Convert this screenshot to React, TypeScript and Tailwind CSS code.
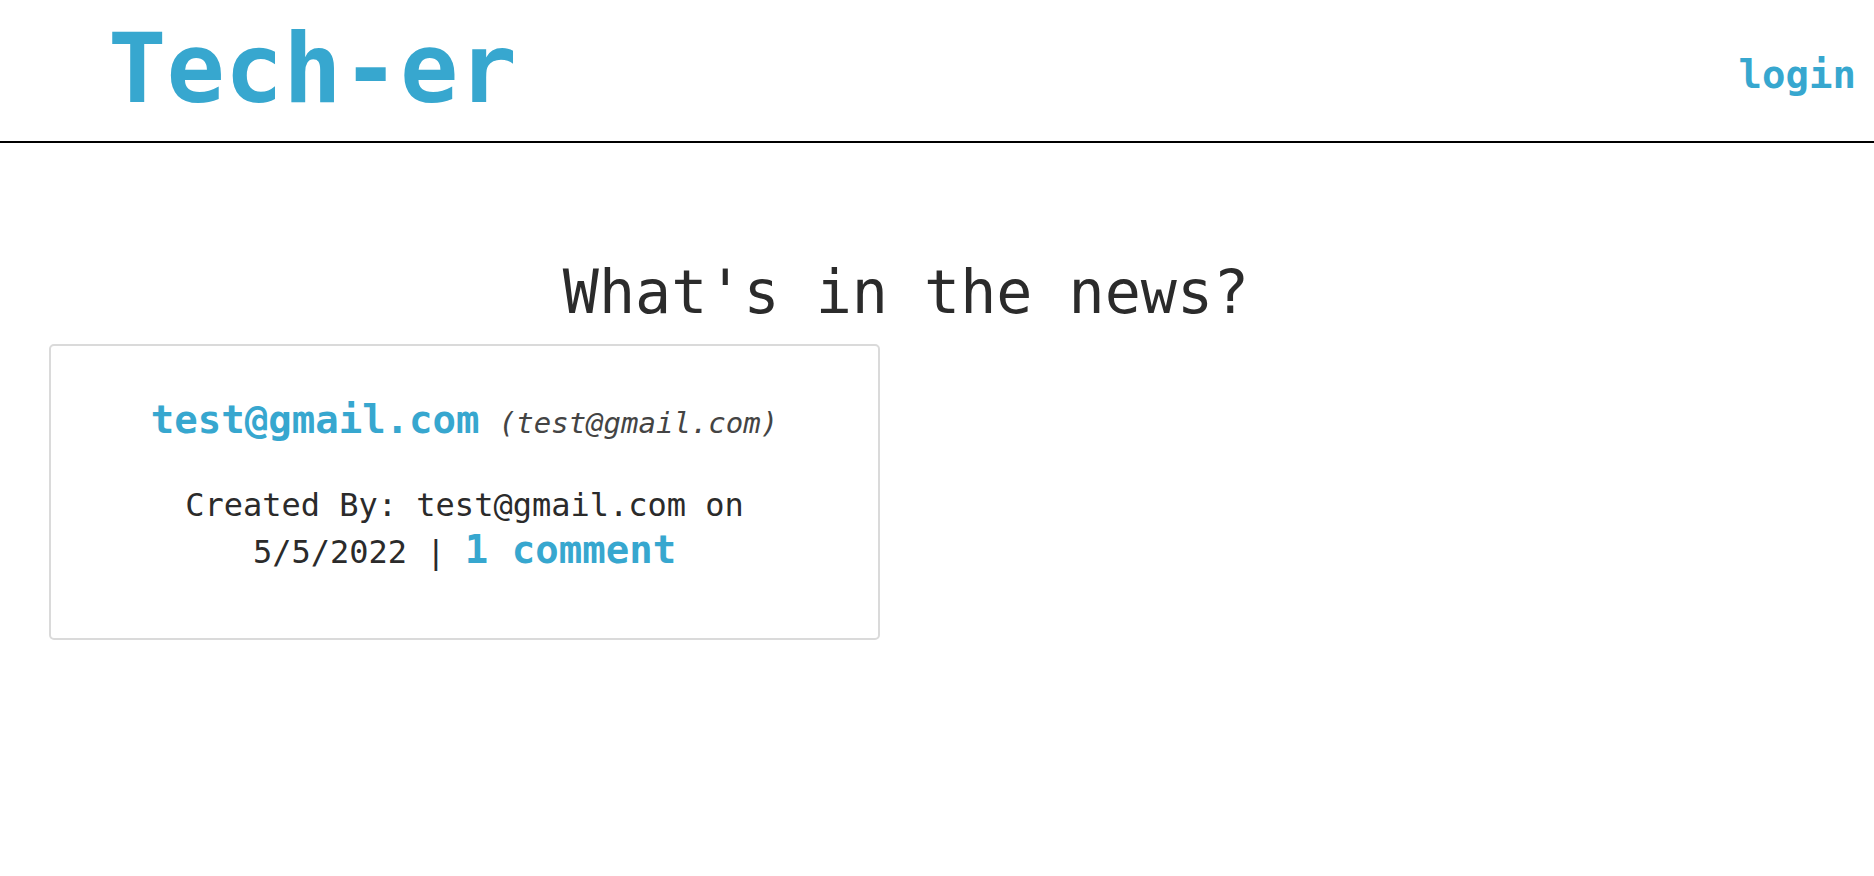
export default function App() {
  return (
    <div className="min-h-screen bg-white font-['DejaVu_Sans_Mono',monospace] text-[#2b2b2b]">
      {/* Header */}
      <header className="flex items-center justify-between border-b-2 border-black pl-[108px] pr-[18px] h-[143px]">
        <h1 className="text-[97px] font-bold leading-none text-[#37a7cf] -mt-[4px]">Tech-er</h1>
        <a className="text-[39px] font-bold text-[#37a7cf] mt-[10px]" href="#">
          login
        </a>
      </header>

      {/* Main */}
      <main className="px-[49px]">
        <h2 className="text-center text-[60px] leading-none mt-[119px] pr-[62px]">What's in the news?</h2>

        <div className="grid grid-cols-[831px] mt-[22px]">
          <div className="border-2 border-[#dadada] rounded-[5px] h-[296px] flex flex-col items-center pt-[45px] px-6">
            <h3 className="text-center text-[32px]">
              <a href="#" className="text-[39px] font-bold text-[#37a7cf]">
                test@gmail.com
              </a>{' '}
              <span className="text-[29px] italic text-[#444]">(test@gmail.com)</span>
            </h3>
            <p className="text-center text-[32px] leading-[47px] mt-[32px] w-[600px]">
              Created By: test@gmail.com on 5/5/2022 |{' '}
              <a href="#" className="text-[39px] leading-[40px] font-bold text-[#37a7cf]">
                1 comment
              </a>
            </p>
          </div>
        </div>
      </main>
    </div>
  )
}
